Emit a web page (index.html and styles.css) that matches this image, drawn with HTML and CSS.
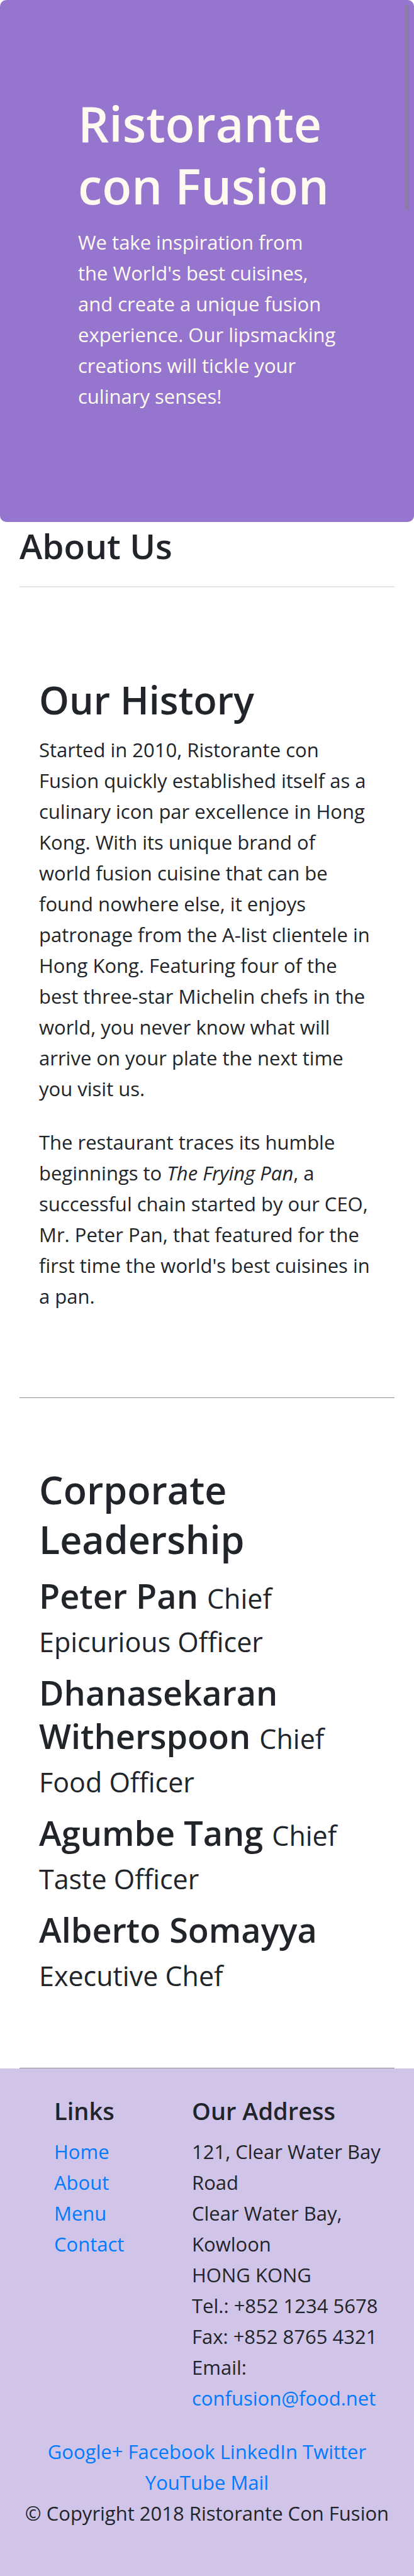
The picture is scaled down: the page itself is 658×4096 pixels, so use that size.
FILE: index.html
```html
<!DOCTYPE html>
<html lang="en">
<head>
<meta charset="utf-8">
<meta name="viewport" content="width=device-width, initial-scale=1">
<title>Ristorante Con Fusion: About Us</title>
<link rel="stylesheet" href="styles.css">
</head>
<body>
<div class="scroll-thumb" aria-hidden="true"></div>
<header class="hero">
  <h1 class="hero-title">Ristorante con Fusion</h1>
  <p class="hero-text">We take inspiration from the World's best cuisines, and create a unique fusion experience. Our lipsmacking creations will tickle your culinary senses!</p>
</header>
<main class="container">
  <h3 class="page-title">About Us</h3>
  <hr class="rule">
  <section class="row-content">
    <h2 class="section-title">Our History</h2>
    <p class="copy">Started in 2010, Ristorante con Fusion quickly established itself as a culinary icon par excellence in Hong Kong. With its unique brand of<br>world fusion cuisine that can be<br>found nowhere else, it enjoys<br>patronage from the A-list clientele in Hong Kong. Featuring four of the best three-star Michelin chefs in the world, you never know what will arrive on your plate the next time you visit us.</p>
    <p class="copy">The restaurant traces its humble beginnings to <em>The Frying Pan</em>, a successful chain started by our CEO, Mr. Peter Pan, that featured for the first time the world's best cuisines in a pan.</p>
  </section>
  <section class="row-content">
    <h2 class="section-title">Corporate Leadership</h2>
    <h3 class="person">Peter Pan <small class="role">Chief Epicurious Officer</small></h3>
    <h3 class="person">Dhanasekaran Witherspoon <small class="role">Chief Food Officer</small></h3>
    <h3 class="person">Agumbe Tang <small class="role">Chief Taste Officer</small></h3>
    <h3 class="person">Alberto Somayya <small class="role">Executive Chef</small></h3>
  </section>
</main>
<footer class="footer">
  <div class="footer-columns">
    <nav class="links">
      <h5 class="footer-title">Links</h5>
      <ul class="link-list">
        <li><a href="#">Home</a></li>
        <li><a href="#">About</a></li>
        <li><a href="#">Menu</a></li>
        <li><a href="#">Contact</a></li>
      </ul>
    </nav>
    <div class="contact">
      <h5 class="footer-title">Our Address</h5>
      <address class="address">121, Clear Water Bay Road<br>Clear Water Bay, Kowloon<br>HONG KONG<br>Tel.: +852 1234 5678<br>Fax: +852 8765 4321<br>Email: <a href="mailto:confusion@food.net">confusion@food.net</a></address>
    </div>
  </div>
  <div class="social">
    <a href="#">Google+</a>
    <a href="#">Facebook</a>
    <a href="#">LinkedIn</a>
    <a href="#">Twitter</a>
    <a href="#">YouTube</a>
    <a href="#">Mail</a>
  </div>
  <p class="copyright">© Copyright 2018 Ristorante Con Fusion</p>
</footer>
</body>
</html>
```
FILE: styles.css
```css
* { box-sizing: border-box; }

body {
  margin: 0;
  background: #fff;
  color: #212529;
  font: 400 31px/49px "Open Sans", "Noto Sans", sans-serif;
}

h1, h2, h3, h5, p, ul { margin: 0; font-weight: 600; }
p, ul { font-weight: 400; }
a { color: #007bff; text-decoration: none; }

.scroll-thumb {
  position: absolute;
  top: 8px;
  right: 8px;
  width: 6px;
  height: 325px;
  background: #8b7ba8;
}

.hero {
  padding: 147px 122px 175px 124px;
  border-radius: 10px;
  background: #9575cd;
  color: floralwhite;
}
.hero-title { margin-bottom: 16px; font-size: 77px; line-height: 99px; }

.container { padding: 0 31px; }
.page-title { padding-top: 3px; margin-bottom: 30px; font-size: 55px; line-height: 69px; }
.rule { height: 2px; margin: 0 0 33px; border: 0; background: #e5e5e5; }

.row-content {
  padding: 106px 31px 100px;
  border-bottom: 1px solid #999;
  box-shadow: inset 0 -1px #eee;
}
.section-title { margin-bottom: 16px; font-size: 61px; line-height: 79px; }
.copy { margin-bottom: 36px; }
.person { margin-bottom: 16px; font-size: 54px; line-height: 69px; }
.role { font-size: 43px; line-height: 49px; font-weight: 400; }

.footer { padding: 43px 31px 75px; background: #d1c4e9; }
.footer-columns { display: grid; grid-template-columns: 219px 1fr; padding-left: 55px; }
.footer-title { margin-bottom: 16px; font-size: 38px; line-height: 49px; }
.link-list { padding: 0; list-style: none; }
.address { margin-bottom: 36px; font-style: normal; }
.social, .copyright { text-align: center; }
```
